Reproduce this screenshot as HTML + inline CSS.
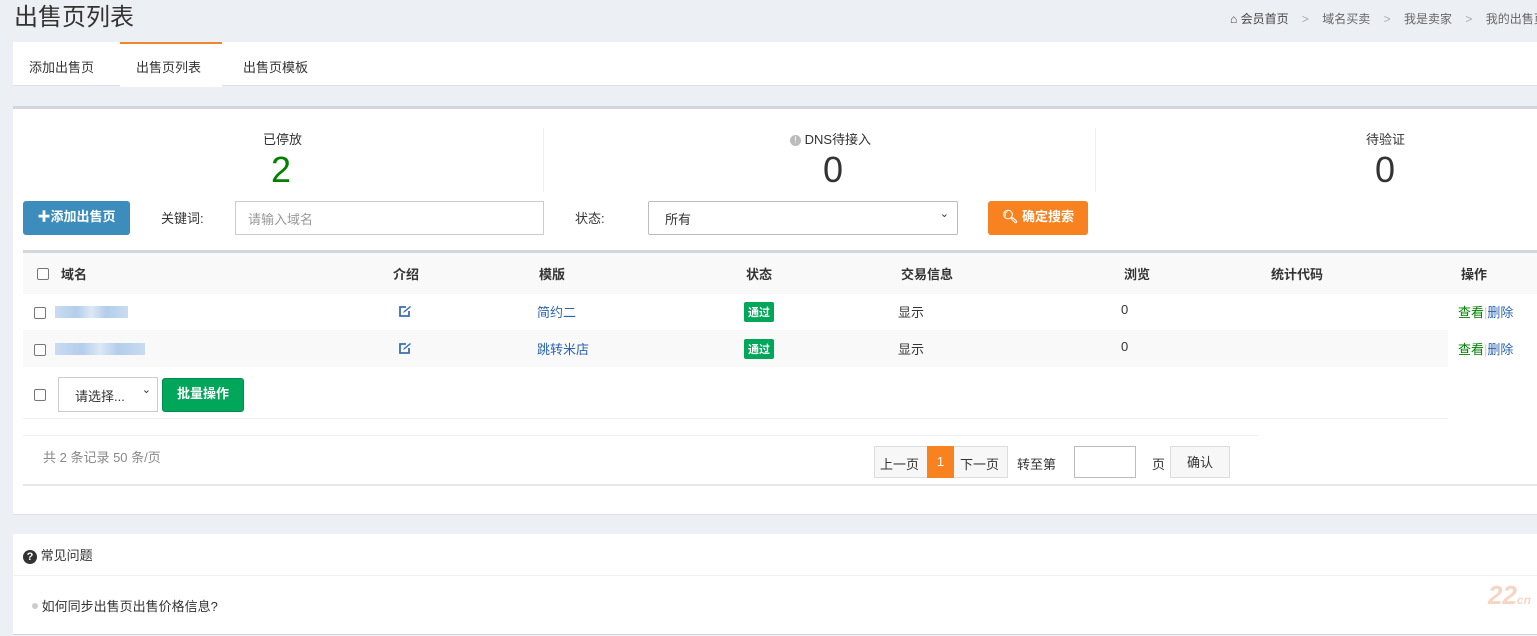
<!DOCTYPE html>
<html><head><meta charset="utf-8"><style>
*{box-sizing:border-box;margin:0;padding:0}
body{width:1537px;height:636px;overflow:hidden;background:#ecf0f5;font-family:"Liberation Sans","Noto Sans CJK SC",sans-serif;font-size:13px;color:#333;position:relative}
.a{position:absolute;white-space:nowrap}
.cb{position:absolute;width:12px;height:12px;border:1px solid #767676;border-radius:2px;background:#fff}
.blur{position:absolute;height:12px;background:linear-gradient(90deg,#c9dcf2,#b3cdeb 30%,#dce8f6 50%,#b3cdeb 70%,#c9dcf2)}
.tag{position:absolute;background:#00a65a;color:#fff;font-size:11px;padding:2px 4px;border-radius:2px;font-weight:bold}
</style></head><body>
<div class="a" style="left:14px;top:-3px;font-size:24px;color:#333">出售页列表</div>
<div class="a" style="left:1230px;top:10px;font-size:12px;color:#444"><span style="font-size:12px">&#8962;</span> 会员首页 <span style="color:#aaa;margin:0 10px">&gt;</span> <span style="color:#666">域名买卖</span> <span style="color:#aaa;margin:0 10px">&gt;</span> <span style="color:#666">我是卖家</span> <span style="color:#aaa;margin:0 10px">&gt;</span> <span style="color:#666">我的出售页</span></div>

<div class="a" style="left:13px;top:42px;width:1524px;height:44px;background:#fff;border-bottom:1px solid #dde"></div>
<div class="a" style="left:120px;top:42px;width:102px;height:45px;background:#fff;border-top:2px solid #f0862a"></div>
<div class="a" style="left:29px;top:57px;font-size:13px">添加出售页</div>
<div class="a" style="left:136px;top:57px;font-size:13px">出售页列表</div>
<div class="a" style="left:243px;top:57px;font-size:13px">出售页模板</div>

<div class="a" style="left:13px;top:106px;width:1524px;height:409px;background:#fff;border-top:3px solid #d2d6de;border-bottom:1px solid #dde"></div>
<div class="a" style="left:543px;top:128px;width:1px;height:64px;background:#f0f0f0"></div>
<div class="a" style="left:1095px;top:128px;width:1px;height:64px;background:#f0f0f0"></div>
<div class="a" style="left:263px;top:129px">已停放</div>
<div class="a" style="left:271px;top:149px;font-size:36px;color:#008000">2</div>
<div class="a" style="left:790px;top:129px"><span style="display:inline-block;width:11px;height:11px;border-radius:50%;background:#bbb;color:#fff;font-size:9px;text-align:center;line-height:11px;vertical-align:1px">!</span> DNS待接入</div>
<div class="a" style="left:823px;top:149px;font-size:36px;color:#333">0</div>
<div class="a" style="left:1366px;top:129px">待验证</div>
<div class="a" style="left:1375px;top:149px;font-size:36px;color:#333">0</div>

<div class="a" style="left:23px;top:201px;width:107px;height:34px;background:#3c8dbc;border-radius:3px;color:#fff;font-weight:bold;line-height:32px;text-align:center">✚添加出售页</div>
<div class="a" style="left:161px;top:208px">关键词:</div>
<div class="a" style="left:235px;top:201px;width:309px;height:34px;border:1px solid #ccc;color:#999;padding:7px 12px">请输入域名</div>
<div class="a" style="left:575px;top:208px">状态:</div>
<div class="a" style="left:648px;top:201px;width:310px;height:34px;border:1px solid #bbb;border-radius:2px;padding:7px 16px">所有<span style="position:absolute;right:8px;top:5px;font-size:11px">&#8964;</span></div>
<div class="a" style="left:988px;top:201px;width:100px;height:34px;background:#f7821f;border-radius:3px;color:#fff;font-weight:bold;line-height:32px;text-align:center">&#128269;&#xFE0E; 确定搜索</div>

<div class="a" style="left:23px;top:250px;width:1514px;height:3px;background:#d2d6de"></div>
<div class="a" style="left:23px;top:253px;width:1514px;height:41px;background:#f9f9f9"></div>
<div class="cb" style="left:37px;top:268px"></div>
<div class="a" style="left:61px;top:264px;font-weight:bold">域名</div>
<div class="a" style="left:393px;top:264px;font-weight:bold">介绍</div>
<div class="a" style="left:539px;top:264px;font-weight:bold">模版</div>
<div class="a" style="left:746px;top:264px;font-weight:bold">状态</div>
<div class="a" style="left:901px;top:264px;font-weight:bold">交易信息</div>
<div class="a" style="left:1124px;top:264px;font-weight:bold">浏览</div>
<div class="a" style="left:1271px;top:264px;font-weight:bold">统计代码</div>
<div class="a" style="left:1461px;top:264px;font-weight:bold">操作</div>

<div class="a" style="left:23px;top:330px;width:1425px;height:37px;background:#f9f9f9"></div>
<div class="cb" style="left:34px;top:307px"></div>
<div class="blur" style="left:55px;top:306px;width:73px"></div>
<svg class="a" style="left:398px;top:305px" width="14" height="13" viewBox="0 0 14 13"><path d="M8 2H2v9h9V6" fill="none" stroke="#3c6fb4" stroke-width="1.8"/><path d="M5 8l1-2 6-5 1 1-6 5z" fill="#3c6fb4"/></svg>
<div class="a" style="left:537px;top:302px;color:#2a64b0">简约二</div>
<div class="tag" style="left:744px;top:302px">通过</div>
<div class="a" style="left:898px;top:302px">显示</div>
<div class="a" style="left:1121px;top:302px">0</div>
<div class="a" style="left:1458px;top:302px"><span style="color:#008000">查看</span><span style="color:#ccc">|</span><span style="color:#2a64b0">删除</span></div>

<div class="cb" style="left:34px;top:344px"></div>
<div class="blur" style="left:55px;top:343px;width:90px"></div>
<svg class="a" style="left:398px;top:342px" width="14" height="13" viewBox="0 0 14 13"><path d="M8 2H2v9h9V6" fill="none" stroke="#3c6fb4" stroke-width="1.8"/><path d="M5 8l1-2 6-5 1 1-6 5z" fill="#3c6fb4"/></svg>
<div class="a" style="left:537px;top:339px;color:#2a64b0">跳转米店</div>
<div class="tag" style="left:744px;top:339px">通过</div>
<div class="a" style="left:898px;top:339px">显示</div>
<div class="a" style="left:1121px;top:339px">0</div>
<div class="a" style="left:1458px;top:339px"><span style="color:#008000">查看</span><span style="color:#ccc">|</span><span style="color:#2a64b0">删除</span></div>

<div class="cb" style="left:34px;top:389px"></div>
<div class="a" style="left:58px;top:377px;width:100px;height:35px;border:1px solid #ccc;padding:8px 16px">请选择...<span style="position:absolute;right:6px;top:5px;font-size:11px">&#8964;</span></div>
<div class="a" style="left:162px;top:378px;width:82px;height:34px;background:#00a65a;border-radius:3px;border:1px solid #008d4c;color:#fff;font-weight:bold;line-height:30px;text-align:center">批量操作</div>
<div class="a" style="left:23px;top:418px;width:1425px;height:1px;background:#f0f0f0"></div>
<div class="a" style="left:23px;top:435px;width:1235px;height:1px;background:#f0f0f0"></div>
<div class="a" style="left:43px;top:447px;color:#888">共 2 条记录 50 条/页</div>
<div class="a" style="left:874px;top:446px;width:134px;height:32px;border:1px solid #ddd;background:#f7f7f7"></div>
<div class="a" style="left:880px;top:454px">上一页</div>
<div class="a" style="left:927px;top:446px;width:27px;height:32px;background:#f7821f;color:#fff;text-align:center;line-height:32px">1</div>
<div class="a" style="left:960px;top:454px">下一页</div>
<div class="a" style="left:1017px;top:454px">转至第</div>
<div class="a" style="left:1074px;top:446px;width:62px;height:32px;border:1px solid #bbb"></div>
<div class="a" style="left:1152px;top:454px">页</div>
<div class="a" style="left:1170px;top:446px;width:60px;height:32px;border:1px solid #ddd;background:#f7f7f7;text-align:center;line-height:32px">确认</div>
<div class="a" style="left:23px;top:484px;width:1514px;height:2px;background:#e6e6e6"></div>

<div class="a" style="left:13px;top:534px;width:1524px;height:101px;background:#fff;border-bottom:1px solid #d2d6de"></div>
<div class="a" style="left:13px;top:575px;width:1524px;height:1px;background:#f0f0f0"></div>
<div class="a" style="left:23px;top:545px"><span style="display:inline-block;width:14px;height:14px;border-radius:50%;background:#333;color:#fff;font-size:11px;font-weight:bold;text-align:center;line-height:14px">?</span> 常见问题</div>
<div class="a" style="left:32px;top:596px"><span style="display:inline-block;width:6px;height:6px;border-radius:50%;background:#ccc;vertical-align:2px"></span> 如何同步出售页出售价格信息?</div>
<div class="a" style="left:1488px;top:580px;font-size:26px;font-style:italic;font-weight:bold;color:#f7d5c4">22<span style="font-size:12px">cn</span></div>
</body></html>
